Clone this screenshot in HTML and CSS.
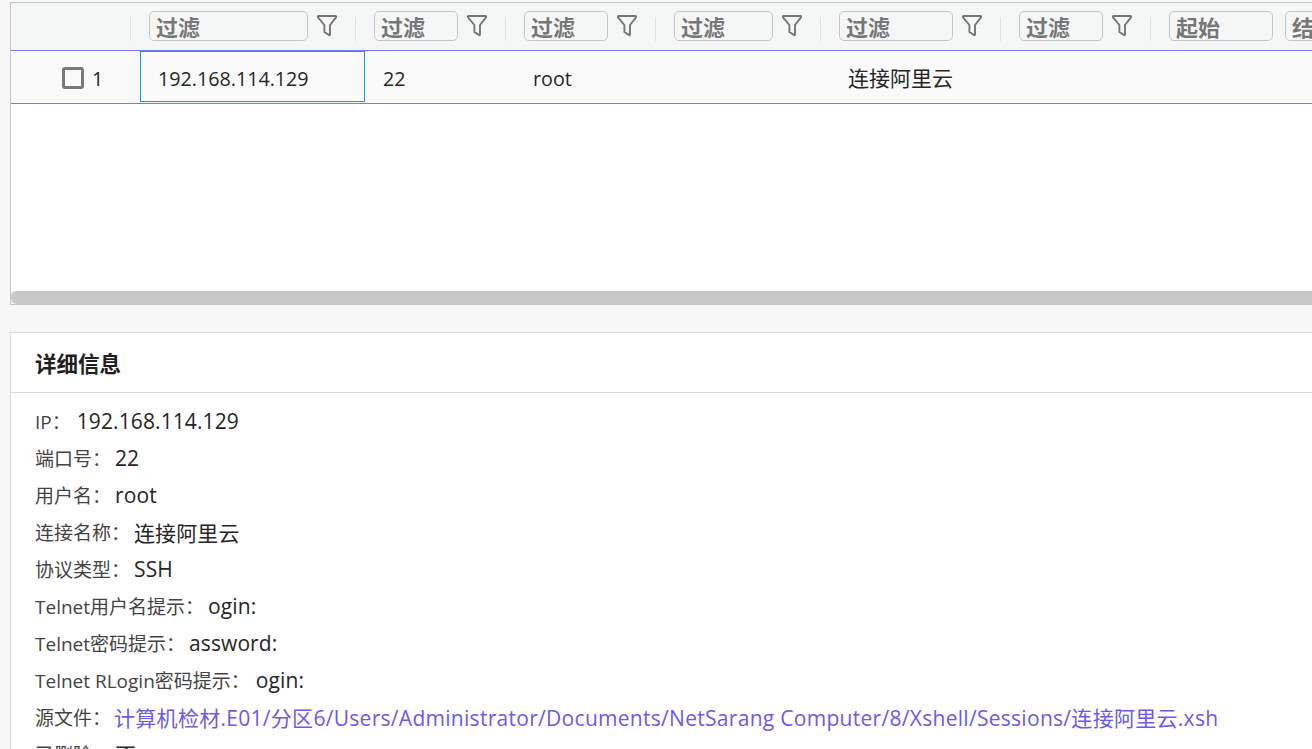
FILE: index.html
```html
<!DOCTYPE html>
<html lang="zh-CN">
<head>
<meta charset="utf-8">
<title>连接详情</title>
<link rel="stylesheet" href="styles.css">
</head>
<body>
<main class="page">
  <section class="grid">
    <div class="grid-head">
      <div class="hcell c-check"><span class="sep"></span></div>
      <div class="hcell c-ip"><input class="filter" placeholder="过滤"><svg class="funnel" viewBox="0 0 20 22"><path d="M1.6 1h16.8a.8.8 0 0 1 .6 1.3L13 10v9.7a.5.5 0 0 1-.8.4L7.4 17V10L1 2.3A.8.8 0 0 1 1.6 1z"/></svg><span class="sep"></span></div>
      <div class="hcell c-port"><input class="filter" placeholder="过滤"><svg class="funnel" viewBox="0 0 20 22"><path d="M1.6 1h16.8a.8.8 0 0 1 .6 1.3L13 10v9.7a.5.5 0 0 1-.8.4L7.4 17V10L1 2.3A.8.8 0 0 1 1.6 1z"/></svg><span class="sep"></span></div>
      <div class="hcell c-user"><input class="filter" placeholder="过滤"><svg class="funnel" viewBox="0 0 20 22"><path d="M1.6 1h16.8a.8.8 0 0 1 .6 1.3L13 10v9.7a.5.5 0 0 1-.8.4L7.4 17V10L1 2.3A.8.8 0 0 1 1.6 1z"/></svg><span class="sep"></span></div>
      <div class="hcell c-a"><input class="filter" placeholder="过滤"><svg class="funnel" viewBox="0 0 20 22"><path d="M1.6 1h16.8a.8.8 0 0 1 .6 1.3L13 10v9.7a.5.5 0 0 1-.8.4L7.4 17V10L1 2.3A.8.8 0 0 1 1.6 1z"/></svg><span class="sep"></span></div>
      <div class="hcell c-name"><input class="filter" placeholder="过滤"><svg class="funnel" viewBox="0 0 20 22"><path d="M1.6 1h16.8a.8.8 0 0 1 .6 1.3L13 10v9.7a.5.5 0 0 1-.8.4L7.4 17V10L1 2.3A.8.8 0 0 1 1.6 1z"/></svg><span class="sep"></span></div>
      <div class="hcell c-b"><input class="filter" placeholder="过滤"><svg class="funnel" viewBox="0 0 20 22"><path d="M1.6 1h16.8a.8.8 0 0 1 .6 1.3L13 10v9.7a.5.5 0 0 1-.8.4L7.4 17V10L1 2.3A.8.8 0 0 1 1.6 1z"/></svg><span class="sep"></span></div>
      <div class="hcell c-c"><input class="filter" placeholder="起始"></div>
      <div class="hcell c-d"><input class="filter" placeholder="结束"></div>
    </div>
    <div class="grid-row">
      <div class="cell c-check check-cell"><span class="box"></span><span>1</span></div>
      <div class="cell c-ip active">192.168.114.129</div>
      <div class="cell c-port">22</div>
      <div class="cell c-user">root</div>
      <div class="cell c-a"></div>
      <div class="cell c-name">连接阿里云</div>
    </div>
    <div class="grid-empty"></div>
    <div class="scrollbar"><div class="thumb"></div></div>
  </section>
  <section class="card">
    <h2 class="card-title">详细信息</h2>
    <dl class="fields">
      <div class="field"><dt class="wide">IP：</dt><dd>192.168.114.129</dd></div>
      <div class="field"><dt>端口号：</dt><dd>22</dd></div>
      <div class="field"><dt>用户名：</dt><dd>root</dd></div>
      <div class="field"><dt>连接名称：</dt><dd>连接阿里云</dd></div>
      <div class="field"><dt>协议类型：</dt><dd>SSH</dd></div>
      <div class="field"><dt>Telnet用户名提示：</dt><dd>ogin:</dd></div>
      <div class="field"><dt>Telnet密码提示：</dt><dd>assword:</dd></div>
      <div class="field"><dt class="wide">Telnet RLogin密码提示：</dt><dd>ogin:</dd></div>
      <div class="field"><dt class="tight">源文件：</dt><dd class="link">计算机检材.E01/分区6/Users/Administrator/Documents/NetSarang Computer/8/Xshell/Sessions/连接阿里云.xsh</dd></div>
      <div class="field"><dt>已删除：</dt><dd>否</dd></div>
    </dl>
  </section>
</main>
</body>
</html>
```

FILE: styles.css
```css
* { box-sizing: border-box; }
html, body { margin: 0; height: 100%; overflow: hidden; }
body {
  background: #f7f7f7;
  font-family: "Open Sans", "Noto Sans CJK SC", sans-serif;
  color: #262626;
}
.page { width: 1312px; height: 749px; padding: 2px 0 0 10px; overflow: hidden; }
.grid {
  width: 1340px;
  height: 303px;
  background: #fff;
  border: 1px solid #c4c6ca;
  display: flex;
  flex-direction: column;
}
.grid-head {
  height: 48px;
  flex: none;
  display: flex;
  background: #f5f7f7;
  border-bottom: 1px solid #7a78ec;
}
.grid-row {
  height: 53px;
  flex: none;
  display: flex;
  background: #fafafa;
  border-bottom: 1px solid #7a78ec;
  font-size: 19.7px;
}
.grid-empty { flex: 1; }
.scrollbar { height: 13px; flex: none; background: #f1f1f1; }
.thumb { height: 100%; background: #c8c8c8; border-radius: 6px; }
.c-check { width: 129px; }
.c-ip { width: 225px; }
.c-port { width: 150px; }
.c-user { width: 150px; }
.c-a { width: 165px; }
.c-name { width: 180px; }
.c-b { width: 150px; }
.c-c { width: 116px; }
.c-d { width: 60px; }
.hcell {
  flex: none;
  position: relative;
  display: flex;
  align-items: center;
  padding: 0 0 1px 9px;
  gap: 9px;
}
.c-check.hcell { padding: 0; }
.filter {
  flex: 1;
  min-width: 0;
  max-width: calc(100% - 57px);
  height: 30px;
  padding: 1px 6px 0;
  border: 1px solid #c6c8c8;
  border-radius: 5px;
  background: #f5f7f7;
  font: 700 22px "Open Sans", "Noto Sans CJK SC", sans-serif;
  color: #777;
}
.filter::placeholder { color: #777; opacity: 1; }
.c-c .filter { max-width: 104px; }
.c-d .filter { max-width: none; }
.funnel { width: 20px; height: 22px; flex: none; }
.funnel path { fill: none; stroke: #757575; stroke-width: 1.9; stroke-linejoin: round; }
.sep {
  position: absolute;
  right: 9px;
  top: 14px;
  width: 1px;
  height: 24px;
  background: #dfe1e1;
}
.cell {
  flex: none;
  display: flex;
  align-items: center;
  padding-left: 9px;
  padding-top: 3px;
}
.check-cell { padding-left: 51px; gap: 8px; }
.box {
  width: 22px;
  height: 22px;
  border: 3px solid #7a7a7a;
  border-radius: 3px;
  position: relative;
  top: -1px;
}
.active {
  height: 51px;
  width: 225px;
  padding-left: 17px;
  border: 1px solid #1a96f0;
}
.c-port.cell { width: 150px; padding-left: 18px; }
.c-user.cell { padding-left: 18px; }
.c-name.cell { padding: 0 0 0 18px; font-size: 21px; }
.card {
  width: 1340px;
  margin-top: 27px;
  background: #fff;
  border: 1px solid #dcdcdc;
}
.card-title {
  margin: 0;
  height: 60px;
  padding: 0 0 1px 24px;
  display: flex;
  align-items: center;
  font-size: 21.5px;
  font-weight: 700;
  color: #1f1f1f;
  border-bottom: 1px solid #dcdcdc;
}
.fields { margin: 0; padding: 9px 0 0 24px; }
.field {
  height: 37px;
  display: flex;
  align-items: center;
}
dt { font-size: 19px; color: #444; margin-right: 4px; }
dt.wide { margin-right: 6px; }
dt.tight { margin-right: 3px; }
dd { margin: 0; font-size: 21px; letter-spacing: 0.1px; color: #262626; }
.link { color: #6a5af0; letter-spacing: 0.29px; }
```
